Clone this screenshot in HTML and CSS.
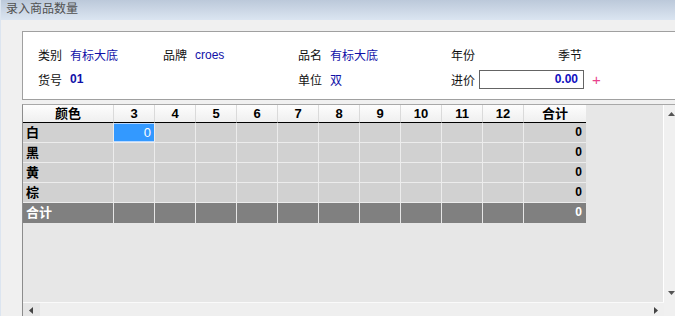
FILE: index.html
```html
<!DOCTYPE html>
<html lang="zh">
<head>
<meta charset="utf-8">
<title>录入商品数量</title>
<link rel="stylesheet" href="styles.css">
</head>
<body>
<div class="window">
  <div class="titlebar">录入商品数量</div>
  <div class="content">
    <div class="panel">
      <div class="field"><span class="label">类别</span><span class="value">有标大底</span></div>
      <div class="field"><span class="label">品牌</span><span class="value">croes</span></div>
      <div class="field"><span class="label">品名</span><span class="value">有标大底</span></div>
      <div class="field"><span class="label">年份</span></div>
      <div class="field"><span class="label">季节</span></div>
      <div class="field"><span class="label">货号</span><span class="value bold">01</span></div>
      <div class="field"></div>
      <div class="field"><span class="label">单位</span><span class="value">双</span></div>
      <div class="field price"><span class="label">进价</span><span class="input">0.00</span><span class="plus">+</span></div>
    </div>

    <div class="frame">
      <div class="viewport">
        <div class="grid">
          <div class="hcell first">颜色</div>
          <div class="hcell">3</div><div class="hcell">4</div><div class="hcell">5</div><div class="hcell">6</div><div class="hcell">7</div>
          <div class="hcell">8</div><div class="hcell">9</div><div class="hcell">10</div><div class="hcell">11</div><div class="hcell">12</div>
          <div class="hcell last">合计</div>

          <div class="cell lbl">白</div>
          <div class="cell selected">0</div><div class="cell"></div><div class="cell"></div><div class="cell"></div><div class="cell"></div>
          <div class="cell"></div><div class="cell"></div><div class="cell"></div><div class="cell"></div><div class="cell"></div>
          <div class="cell sum">0</div>

          <div class="cell lbl">黑</div>
          <div class="cell"></div><div class="cell"></div><div class="cell"></div><div class="cell"></div><div class="cell"></div>
          <div class="cell"></div><div class="cell"></div><div class="cell"></div><div class="cell"></div><div class="cell"></div>
          <div class="cell sum">0</div>

          <div class="cell lbl">黄</div>
          <div class="cell"></div><div class="cell"></div><div class="cell"></div><div class="cell"></div><div class="cell"></div>
          <div class="cell"></div><div class="cell"></div><div class="cell"></div><div class="cell"></div><div class="cell"></div>
          <div class="cell sum">0</div>

          <div class="cell lbl">棕</div>
          <div class="cell"></div><div class="cell"></div><div class="cell"></div><div class="cell"></div><div class="cell"></div>
          <div class="cell"></div><div class="cell"></div><div class="cell"></div><div class="cell"></div><div class="cell"></div>
          <div class="cell sum">0</div>

          <div class="cell total lbl">合计</div>
          <div class="cell total"></div><div class="cell total"></div><div class="cell total"></div><div class="cell total"></div><div class="cell total"></div>
          <div class="cell total"></div><div class="cell total"></div><div class="cell total"></div><div class="cell total"></div><div class="cell total"></div>
          <div class="cell total sum">0</div>
        </div>
      </div>
      <div class="vscroll">
        <svg class="arrow" width="7" height="4" viewBox="0 0 7 4"><polygon points="3.5,0 7,4 0,4" fill="#555"/></svg>
        <svg class="arrow" width="7" height="4" viewBox="0 0 7 4"><polygon points="0,0 7,0 3.5,4" fill="#555"/></svg>
      </div>
      <div class="hscroll">
        <svg class="arrow" width="4" height="7" viewBox="0 0 4 7"><polygon points="4,0 4,7 0,3.5" fill="#444"/></svg>
        <svg class="arrow" width="4" height="7" viewBox="0 0 4 7"><polygon points="0,0 4,3.5 0,7" fill="#444"/></svg>
      </div>
    </div>
  </div>
</div>
</body>
</html>
```

FILE: styles.css
```css
html, body {
  margin: 0;
  padding: 0;
}
body {
  width: 675px;
  height: 316px;
  overflow: hidden;
  background: #f0f0f0;
  font-family: "Liberation Sans", "Noto Sans CJK SC", sans-serif;
  font-size: 12px;
  color: #000;
}
.window {
  height: 316px;
  border-left: 1px solid #dce5f0;
  box-sizing: border-box;
}
.titlebar {
  height: 20px;
  line-height: 19px;
  padding-left: 5px;
  background: linear-gradient(#bcc9da, #dbe5f1);
  color: #505050;
  font-size: 12px;
  white-space: nowrap;
}
.content {
  padding: 11px 0 0 21px;
}
.panel {
  width: 680px;
  height: 69px;
  box-sizing: border-box;
  border: 1px solid #a0a0a0;
  background: #fff;
  padding: 10px 0 0 15px;
  display: grid;
  grid-template-columns: 125px 135px 153px 107px auto;
  grid-template-rows: 25px 24px;
}
.field {
  display: flex;
  align-items: center;
  gap: 8px;
  white-space: nowrap;
}
.label {
  color: #111;
}
.value {
  color: #1010a8;
}
.bold {
  font-weight: bold;
}
.price {
  grid-column: 4 / span 2;
  gap: 4px;
}
.input {
  width: 105px;
  height: 19px;
  box-sizing: border-box;
  border: 1px solid #646464;
  text-align: right;
  padding-right: 5px;
  line-height: 17px;
  font-weight: bold;
  color: #1010c0;
}
.plus {
  margin-left: 4px;
  color: #e8428c;
  font-size: 15px;
}
.frame {
  margin-top: 4px;
  width: 662px;
  border-top: 1px solid #a8a8a8;
  border-left: 1px solid #8c8c8c;
  display: grid;
  grid-template-columns: 641px 17px;
  grid-template-rows: 197px 17px;
}
.viewport {
  background: #e7e7e7;
  border-right: 1px solid #fff;
  overflow: hidden;
}
.grid {
  display: grid;
  grid-template-columns: 91px repeat(10, 41px) 62px;
  width: 563px;
}
.hcell {
  height: 18px;
  box-sizing: border-box;
  border-right: 1px solid #dadada;
  border-bottom: 1px solid #000;
  background: linear-gradient(#fdfdfd, #efefef);
  text-align: center;
  font-weight: bold;
  font-size: 13px;
  line-height: 17px;
}
.hcell.last {
  border-right: none;
}
.cell {
  height: 20px;
  box-sizing: border-box;
  border-right: 1px solid #ececec;
  border-bottom: 1px solid #ececec;
  background: #d1d1d1;
  font-weight: bold;
  line-height: 19px;
}
.cell.lbl {
  font-size: 13px;
  padding-left: 3px;
}
.cell.sum {
  text-align: right;
  padding-right: 4px;
  border-right: none;
}
.cell.selected {
  background: #3399ff;
  color: #fff;
  font-size: 13px;
  font-weight: normal;
  text-align: right;
  padding-right: 3px;
  box-shadow: inset 0 1px 0 #b8d8ff, inset 0 -1px 0 #b8d8ff;
}
.cell.total {
  background: #808080;
  color: #fff;
  border-right-color: #e6e6e6;
  border-bottom: none;
}
.cell.total.sum {
  border-right: none;
}
.vscroll {
  grid-row: 1 / span 2;
  grid-column: 2;
  background: #f0f0f0;
  display: flex;
  flex-direction: column;
  justify-content: space-between;
  padding: 7px 0 24px 4px;
  box-sizing: border-box;
}
.hscroll {
  background: linear-gradient(90deg, #e6e6e6 0, #e6e6e6 17px, #efefef 17px);
  border-top: 1px solid #fafafa;
  display: flex;
  justify-content: space-between;
  align-items: flex-start;
  padding: 4px 6px 0 6px;
  box-sizing: border-box;
}
.arrow {
  display: block;
}
```
